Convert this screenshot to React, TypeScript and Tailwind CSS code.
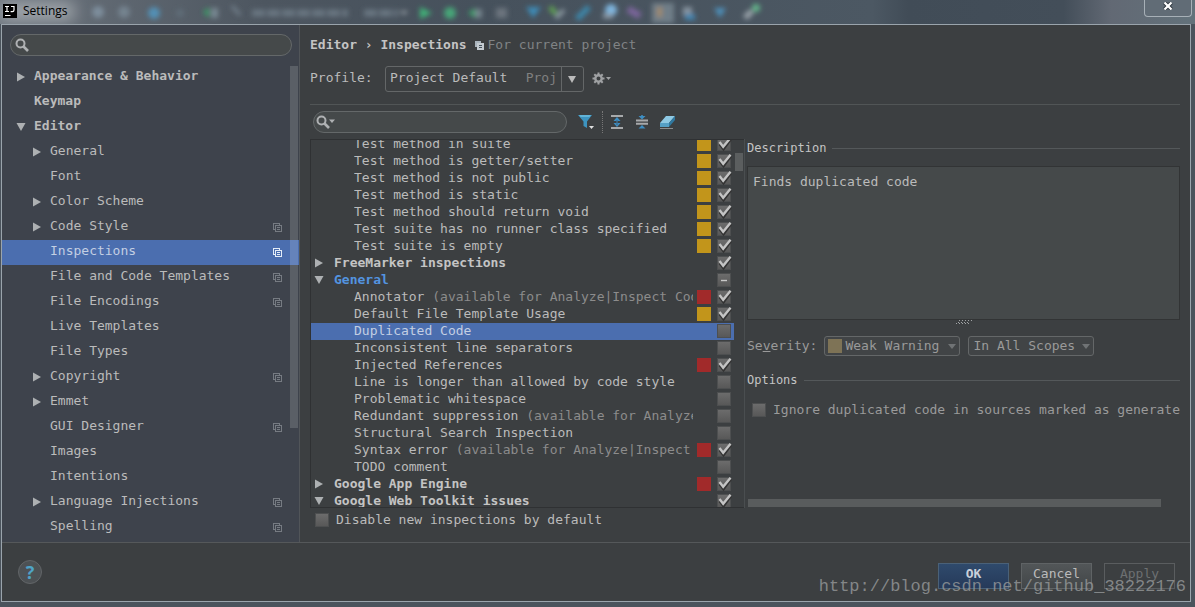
import { ReactNode } from "react";
import clsx from "clsx";

type SettingsNode = {
  label: string;
  level?: number;
  arrow?: "right" | "down";
  project?: boolean;
  selected?: boolean;
};

const settingsTree: SettingsNode[] = [
  { label: "Appearance & Behavior", level: 0, arrow: "right" },
  { label: "Keymap", level: 0 },
  { label: "Editor", level: 0, arrow: "down" },
  { label: "General", arrow: "right" },
  { label: "Font" },
  { label: "Color Scheme", arrow: "right" },
  { label: "Code Style", arrow: "right", project: true },
  { label: "Inspections", project: true, selected: true },
  { label: "File and Code Templates", project: true },
  { label: "File Encodings", project: true },
  { label: "Live Templates" },
  { label: "File Types" },
  { label: "Copyright", arrow: "right", project: true },
  { label: "Emmet", arrow: "right" },
  { label: "GUI Designer", project: true },
  { label: "Images" },
  { label: "Intentions" },
  { label: "Language Injections", arrow: "right", project: true },
  { label: "Spelling", project: true },
];

type Inspection = {
  label: string;
  note?: string;
  group?: "right" | "down";
  severity?: "warning" | "error";
  state: "on" | "off" | "mixed";
  changed?: boolean;
  selected?: boolean;
};

const inspections: Inspection[] = [
  { label: "Test method in suite", severity: "warning", state: "on" },
  { label: "Test method is getter/setter", severity: "warning", state: "on" },
  { label: "Test method is not public", severity: "warning", state: "on" },
  { label: "Test method is static", severity: "warning", state: "on" },
  { label: "Test method should return void", severity: "warning", state: "on" },
  { label: "Test suite has no runner class specified", severity: "warning", state: "on" },
  { label: "Test suite is empty", severity: "warning", state: "on" },
  { label: "FreeMarker inspections", group: "right", state: "on" },
  { label: "General", group: "down", state: "mixed", changed: true },
  { label: "Annotator", note: "(available for Analyze|Inspect Code)", severity: "error", state: "on" },
  { label: "Default File Template Usage", severity: "warning", state: "on" },
  { label: "Duplicated Code", state: "off", selected: true },
  { label: "Inconsistent line separators", state: "off" },
  { label: "Injected References", severity: "error", state: "on" },
  { label: "Line is longer than allowed by code style", state: "off" },
  { label: "Problematic whitespace", state: "off" },
  { label: "Redundant suppression", note: "(available for Analyze|Inspect Code)", state: "off" },
  { label: "Structural Search Inspection", state: "off" },
  { label: "Syntax error", note: "(available for Analyze|Inspect Code)", severity: "error", state: "on" },
  { label: "TODO comment", state: "off" },
  { label: "Google App Engine", group: "right", severity: "error", state: "on" },
  { label: "Google Web Toolkit issues", group: "down", state: "on" },
];

function Arrow({ dir }: { dir?: "right" | "down" }) {
  return (
    <svg viewBox="0 0 10 10" className="size-[10px] shrink-0 fill-[#adb0b2]">
      {dir === "right" && <path d="M1 0.5 L9 5 L1 9.5 Z" />}
      {dir === "down" && <path d="M0.5 1 H9.5 L5 9 Z" />}
    </svg>
  );
}

function CopyIcon({ bright }: { bright?: boolean }) {
  return (
    <svg
      viewBox="0 0 9 9"
      className={clsx("size-[9px] shrink-0", bright ? "stroke-[#e3ecf7]" : "stroke-[#767b82]")}
      fill="none"
      strokeWidth="1"
      shapeRendering="crispEdges"
    >
      <path d="M2.5 6.5 H0.5 V0.5 H6.5 V2" />
      <path d="M2.5 2.5 H8.5 V8.5 H2.5 Z M4 4.5 H7 M4 6.5 H7" />
    </svg>
  );
}

function ProjectIcon() {
  return (
    <svg viewBox="0 0 9 9" className="size-[9px] shrink-0" shapeRendering="crispEdges">
      <path d="M0 0 H6 V2 H2 V6 H0 Z" fill="#a9b4bd" />
      <path d="M2 2 H9 V9 H2 Z" fill="#c3cbd1" />
      <path d="M4 4.5 H7 M4 6.5 H7" stroke="#45525d" />
    </svg>
  );
}

function Magnifier({ menu }: { menu?: boolean }) {
  return (
    <svg viewBox="0 0 20 14" className="h-[14px] w-5 shrink-0" fill="none">
      <circle cx="5.5" cy="5.5" r="4" stroke="#afb1b3" strokeWidth="2" />
      <path d="M8.5 8.5 L13 13" stroke="#afb1b3" strokeWidth="2.6" />
      {menu && <path d="M13 4.5 H19 L16 8 Z" fill="#afb1b3" />}
    </svg>
  );
}

function Check({ state, id, label }: { state: Inspection["state"]; id: string; label?: string }) {
  return (
    <span className="grid size-[14px] shrink-0">
      <input
        id={id}
        type="checkbox"
        defaultChecked={state === "on"}
        aria-label={label}
        className="col-start-1 row-start-1 size-[14px] appearance-none border border-[#4d4f50] bg-linear-to-b from-[#6c6c6c] to-[#585858]"
      />
      <svg
        viewBox="0 0 14 14"
        className="pointer-events-none col-start-1 row-start-1 size-[14px] overflow-visible"
        fill="none"
      >
        {state === "on" && (
          <>
            <path d="M3 7 L6.5 11.5 L13.5 2" stroke="#333" strokeWidth="3.4" />
            <path d="M2.5 5 L6.2 9.8 L13.5 0.8" stroke="#c4c4c4" strokeWidth="2.4" />
          </>
        )}
        {state === "mixed" && <path d="M4 7.5 H10" stroke="#c8c8c8" strokeWidth="1.4" />}
      </svg>
    </span>
  );
}

function SectionTitle({ children }: { children: ReactNode }) {
  return (
    <div className="flex h-4 items-center gap-1.5 text-xs leading-4 text-[#c4c4c4]">
      <h3>{children}</h3>
      <div className="h-px flex-1 bg-[#54585a]" />
    </div>
  );
}

function TitleBar() {
  return (
    <header className="relative flex h-6 shrink-0 items-center justify-between overflow-hidden bg-[#48535e]">
      <svg
        viewBox="0 0 1195 24"
        preserveAspectRatio="xMinYMin slice"
        className="absolute inset-0 h-full w-full"
      >
        <defs>
          <filter id="soft" x="-50%" y="-100%" width="200%" height="300%">
            <feGaussianBlur stdDeviation="2.6" />
          </filter>
          <filter id="wide" x="-50%" y="-100%" width="200%" height="300%">
            <feGaussianBlur stdDeviation="8" />
          </filter>
          <linearGradient id="glass">
            <stop offset="0" stopColor="#6c747d" />
            <stop offset="0.22" stopColor="#4d5660" />
            <stop offset="0.4" stopColor="#46515c" />
            <stop offset="0.73" stopColor="#4c5863" />
            <stop offset="0.76" stopColor="#414c57" />
            <stop offset="0.89" stopColor="#434e59" />
            <stop offset="0.93" stopColor="#626974" />
            <stop offset="1" stopColor="#63727b" />
          </linearGradient>
        </defs>
        <rect width="1195" height="24" fill="url(#glass)" />
        <rect x="0" y="3" width="74" height="17" fill="#a6abb0" filter="url(#wide)" />
        <g filter="url(#soft)">
          <circle cx="98" cy="12" r="6" fill="#7d8d9b" />
          <circle cx="124" cy="12" r="6" fill="#75838f" />
          <circle cx="154" cy="13" r="6" fill="#5390b5" />
          <circle cx="180" cy="13" r="4" fill="#5f6d78" />
          <path d="M203 12 L209 7 V18 Z" fill="#389c66" />
          <rect x="211" y="8" width="7" height="10" fill="#788993" />
          <path d="M232 6 L240 15" stroke="#75828d" strokeWidth="3" />
          <path d="M252 13 H348 M364 13 H398" stroke="#697681" strokeWidth="7" strokeDasharray="13 2" />
          <path d="M400 11 H408 L404 15 Z" fill="#a0a8af" />
          <path d="M420 7 L432 13 L420 19 Z" fill="#3fb478" />
          <circle cx="450" cy="13" r="6" fill="#46a678" />
          <path d="M468 13 L475 8 V18 Z" fill="#3ca06b" />
          <rect x="475" y="9" width="7" height="9" fill="#74848d" />
          <rect x="496" y="8" width="11" height="10" fill="#6c757e" />
          <path d="M526 7 H541 L533 18 Z" fill="#3d8cb8" />
          <path d="M550 7 L556 14" stroke="#5fa052" strokeWidth="5" />
          <path d="M556 18 L564 10" stroke="#8d9aa3" strokeWidth="4" />
          <path d="M577 19 L589 7" stroke="#3d87aa" strokeWidth="6" />
          <circle cx="611" cy="10" r="6" fill="#7fb6df" />
          <path d="M603 16 H613" stroke="#8b98a4" strokeWidth="5" />
          <path d="M628 9 L640 16" stroke="#7b659b" strokeWidth="7" />
          <rect x="652" y="3" width="22" height="20" fill="#707e88" />
          <rect x="657" y="7" width="5" height="10" fill="#a18a6c" />
          <rect x="683" y="7" width="9" height="9" fill="#8794a0" />
          <rect x="685" y="14" width="10" height="6" fill="#4285b1" />
          <path d="M714 8 H726 L720 18 Z" fill="#4e91bc" />
          <path d="M745 18 L752 11" stroke="#9aa3aa" strokeWidth="6" />
          <circle cx="756" cy="8" r="4" fill="#62b58a" />
        </g>
      </svg>
      <div className="relative flex items-center gap-1.5 pb-0.5 pl-[3px]">
        <svg viewBox="0 0 14 14" className="size-[14px]">
          <rect width="14" height="14" fill="#000" />
          <path
            d="M2 2.5 H6 M4 2.5 V7.5 M2 7.5 H6 M8 2.5 H11 V6 Q11 7.6 9.3 7.6 H7.6 M2 11.5 H7.5"
            stroke="#fff"
            strokeWidth="1.2"
            fill="none"
          />
        </svg>
        <h1 className="font-['Open_Sans',sans-serif] text-xs leading-4 text-black">Settings</h1>
      </div>
      <button
        aria-label="Close"
        className="relative mr-[3px] flex h-[17px] w-12 items-center justify-center self-start rounded-b-[4px] border border-t-0 border-[#a7b0b7] bg-[#616c76]"
      >
        <svg viewBox="0 0 10 8" className="mb-1 h-2 w-[10px]">
          <path d="M1.5 0.5 L8.5 7.5 M8.5 0.5 L1.5 7.5" stroke="#2f373e" strokeWidth="4" />
          <path d="M1.5 0.5 L8.5 7.5 M8.5 0.5 L1.5 7.5" stroke="#fff" strokeWidth="2.2" />
        </svg>
      </button>
    </header>
  );
}

function Sidebar() {
  return (
    <aside className="flex w-[298px] shrink-0 flex-col border-r border-[#515559] bg-[#3e434c] pt-[9px]">
      <label className="mr-[7px] mb-[9px] ml-2 flex h-[22px] items-center rounded-full border border-[#646869] bg-[#45494a] pl-1">
        <Magnifier />
        <input type="text" aria-label="Search settings" className="min-w-0 flex-1 bg-transparent outline-none" />
      </label>
      <div className="relative flex-1">
        <ul>
          {settingsTree.map((node) => (
            <li
              key={node.label}
              className={clsx(
                "flex h-[25px] items-center gap-2 pr-[17px] pb-px",
                node.level === 0 ? "pl-[14px] font-bold" : "pl-[30px]",
                node.selected && "bg-[#4b6eaf] text-[#c3cfe3]"
              )}
            >
              <Arrow dir={node.arrow} />
              <span className="flex-1 pb-0.5">{node.label}</span>
              {node.project && <CopyIcon bright={node.selected} />}
            </li>
          ))}
        </ul>
        <div className="absolute top-px right-px h-[362px] w-2 bg-white/15" />
      </div>
    </aside>
  );
}

function Toolbar() {
  return (
    <div className="flex h-[22px] items-center">
      <label className="ml-[3px] flex h-[22px] w-[254px] items-center rounded-full border border-[#646869] bg-[#45494a] pl-0.5">
        <Magnifier menu />
        <input type="text" aria-label="Search inspections" className="min-w-0 flex-1 bg-transparent outline-none" />
      </label>
      <button aria-label="Filter" className="ml-[11px]">
        <svg viewBox="0 0 16 16" className="size-4">
          <path d="M0 1 H14 L9 7.5 V14 L5.5 12 V7.5 Z" fill="#3d94c0" />
          <path d="M1 1 H13 L11.5 3 H2.5 Z" fill="#62b4d8" />
          <path d="M11 12 H16 L13.5 15 Z" fill="#e0e0e0" />
        </svg>
      </button>
      <div className="mr-[7px] ml-2 h-[22px] border-l border-dotted border-[#777]" />
      <button aria-label="Expand all">
        <svg viewBox="0 0 14 16" className="h-4 w-[14px]">
          <path d="M1 2 H13 M1 14 H13" stroke="#a7a9ab" strokeWidth="2" />
          <path d="M7 3 L10.5 7 H3.5 Z M7 13 L10.5 9 H3.5 Z" fill="#3e8ec2" />
          <path d="M7 6 V11" stroke="#3e6f92" strokeWidth="1.4" />
        </svg>
      </button>
      <button aria-label="Collapse all" className="ml-[11px]">
        <svg viewBox="0 0 14 16" className="h-4 w-[14px]">
          <path d="M1 6.5 H13 M1 9.7 H13" stroke="#a7a9ab" strokeWidth="2" />
          <path d="M3.5 2 H10.5 L7 5.5 Z M3.5 14.5 H10.5 L7 11 Z" fill="#3e8ec2" />
          <path d="M7 1 V4" stroke="#3e8ec2" strokeWidth="1.6" />
        </svg>
      </button>
      <button aria-label="Reset" className="ml-2.5">
        <svg viewBox="0 0 17 16" className="h-4 w-[17px]">
          <path d="M1 9 L7 2 H16 L10 9 Z" fill="#8ec9e4" />
          <path d="M1 9 H10 V13 H1 Z" fill="#55a0c6" />
          <path d="M10 9 L16 2 V6 L10 13 Z" fill="#2f78a0" />
          <path d="M1 14.5 H14" stroke="#8a8d8f" />
        </svg>
      </button>
    </div>
  );
}

function InspectionRow({ item, index }: { item: Inspection; index: number }) {
  return (
    <li
      className={clsx(
        "mr-2.5 flex h-[17px] shrink-0 items-center gap-1 pr-[3px] pb-0.5",
        item.group ? "pl-[3px] font-bold text-[#c4c4c4]" : "pl-[43px]",
        item.selected && "bg-[#4b6eaf] text-[#c3cfe3]"
      )}
    >
      {item.group && (
        <span className="mr-1.5 flex">
          <Arrow dir={item.group} />
        </span>
      )}
      <span className={clsx("flex-1 overflow-hidden whitespace-nowrap", item.changed && "text-[#5394e0]")}>
        {item.label}
        {item.note && <span className="text-[#8c8c8c]"> {item.note}</span>}
      </span>
      <span
        className={clsx(
          "mr-0.5 size-[14px] shrink-0",
          item.severity === "warning" && "bg-[#c2951b]",
          item.severity === "error" && "bg-[#a12a2a]"
        )}
      />
      <Check id={`inspection-${index}`} state={item.state} label={item.label} />
    </li>
  );
}

function InspectionList() {
  return (
    <div className="flex w-[435px] shrink-0 flex-col border-r border-[#4a4e50]">
      <div className="relative min-h-0 flex-1 overflow-hidden border border-r-0 border-[#2f3133]">
        {/* scrolled by a quarter row */}
        <ul className="-mt-1">
          {inspections.map((item, i) => (
            <InspectionRow key={item.label} item={item} index={i} />
          ))}
        </ul>
        <div className="absolute top-[13px] right-px h-[18px] w-2 bg-[#5b5e5f]" />
      </div>
    </div>
  );
}

function Details() {
  const selectBox =
    "h-5 w-full appearance-none rounded-[3px] border border-[#646768] bg-[#414446] text-[#9a9a9a] leading-4";
  return (
    <div className="flex min-w-0 flex-1 flex-col pt-px pl-0.5">
      <SectionTitle>Description</SectionTitle>
      <div className="mt-2.5 h-[154px] border border-[#323435] bg-[#45494a] px-[5px] py-[7px]">
        Finds duplicated code
      </div>
      <div className="flex h-4 justify-center">
        <svg viewBox="0 0 16 4" className="h-1 w-4">
          <path
            d="M3 0.5 H16 M2 2.5 H14 M0 3.5 H13"
            stroke="#a0a3a5"
            strokeWidth="1"
            strokeDasharray="1 2"
          />
        </svg>
      </div>
      <div className="flex items-center gap-2 text-[#9a9a9a]">
        <label htmlFor="severity" className="-mr-px">
          Se<span className="underline">v</span>erity:
        </label>
        <div className="relative flex w-[136px] items-center">
          <select id="severity" className={clsx(selectBox, "pl-5")}>
            <option>Weak Warning</option>
          </select>
          <span className="pointer-events-none absolute left-1 size-[14px] bg-[#7e7356]" />
          <svg viewBox="0 0 8 5" className="pointer-events-none absolute right-1 h-[5px] w-2">
            <path d="M0 0 H8 L4 5 Z" fill="#707375" />
          </svg>
        </div>
        <div className="relative flex w-[126px] items-center">
          <select aria-label="Scope" className={clsx(selectBox, "pl-1")}>
            <option>In All Scopes</option>
          </select>
          <svg viewBox="0 0 8 5" className="pointer-events-none absolute right-1 h-[5px] w-2">
            <path d="M0 0 H8 L4 5 Z" fill="#707375" />
          </svg>
        </div>
      </div>
      <div className="mt-4">
        <SectionTitle>Options</SectionTitle>
      </div>
      <div className="mt-3.5 flex items-center gap-[7px] overflow-hidden pl-[5px] whitespace-nowrap text-[#9a9a9a]">
        <Check id="ignore-generated" state="off" />
        <label htmlFor="ignore-generated">Ignore duplicated code in sources marked as generated</label>
      </div>
      <div className="mt-auto mr-[19px] mb-px ml-px h-2 bg-[#595c5d]" />
    </div>
  );
}

function Main() {
  return (
    <main className="flex min-w-0 flex-1 flex-col px-2.5 pt-2.5">
      <div className="flex h-5 items-center font-bold text-[#c4c4c4]">
        <h2 className="whitespace-pre">Editor › Inspections</h2>
        <span className="mr-1 ml-2 flex">
          <ProjectIcon />
        </span>
        <span className="font-normal text-[#808385]">For current project</span>
      </div>
      <div className="mt-[11px] flex h-[26px] items-center">
        <label htmlFor="profile" className="w-[75px] pb-0.5">
          Profile:
        </label>
        <div className="relative flex h-[26px] w-[199px]">
          <select
            id="profile"
            className="h-full w-full appearance-none rounded-[3px] border border-[#646768] pb-0.5 pl-1"
          >
            <option>Project Default</option>
          </select>
          <span className="pointer-events-none absolute inset-y-0 right-0 flex items-center">
            <span className="pr-1 pb-0.5 text-[#808080]">Proj</span>
            <span className="flex h-full w-[23px] items-center justify-center border-l border-[#646768] pr-0.5">
              <svg viewBox="0 0 8 7" className="h-[7px] w-2">
                <path d="M0 0 H8 L4 7 Z" fill="#bbbbbb" />
              </svg>
            </span>
          </span>
        </div>
        <button aria-label="Profile actions" className="mb-0.5 ml-2">
          <svg viewBox="0 0 20 13" className="h-[13px] w-5">
            <circle cx="6.5" cy="6.5" r="3.2" stroke="#9fa1a3" strokeWidth="2.4" fill="none" />
            <path
              d="M6.5 0.5 V3 M6.5 10 V12.5 M0.5 6.5 H3 M10 6.5 H12.5 M2.3 2.3 L4 4 M9 9 L10.7 10.7 M10.7 2.3 L9 4 M4 9 L2.3 10.7"
              stroke="#9fa1a3"
              strokeWidth="2"
            />
            <path d="M14 5 H19 L16.5 8 Z" fill="#9fa1a3" />
          </svg>
        </button>
      </div>
      <div className="mt-3 mb-1.5 h-px bg-[#515556]" />
      <Toolbar />
      <div className="mt-1.5 flex min-h-0 flex-1">
        <InspectionList />
        <Details />
      </div>
      <div className="mb-3 flex h-[22px] items-center gap-[7px] pt-0.5 pl-[5px]">
        <Check id="disable-new" state="off" />
        <label htmlFor="disable-new">Disable new inspections by default</label>
      </div>
    </main>
  );
}

function Footer() {
  return (
    <footer className="relative flex h-[59px] shrink-0 items-center justify-between border-t border-[#55585a] pr-[15px] pl-4">
      <button
        aria-label="Help"
        className="size-6 rounded-full border border-[#626568] bg-[#4d5154] font-['Open_Sans',sans-serif] text-lg leading-5 font-bold text-[#4fa3c7]"
      >
        ?
      </button>
      <div className="mt-2 flex gap-3">
        <button className="h-[26px] w-[71px] border border-[#4a6178] bg-linear-to-b from-[#2f4a6c] to-[#263a5a] pb-1 font-bold text-[#c8d0da]">
          OK
        </button>
        <button className="h-[26px] w-[71px] border border-[#5f6365] bg-linear-to-b from-[#525658] to-[#424648] pb-1">
          Cancel
        </button>
        <button disabled className="h-[26px] w-[71px] border border-[#5a5d5f] pb-1 text-[#6d7072]">
          Apply
        </button>
      </div>
      <p className="pointer-events-none absolute right-1 bottom-1 font-['Liberation_Mono',monospace] text-[17px] leading-5 text-[#979a9b]/80">
        http://blog.csdn.net/github_38222176
      </p>
    </footer>
  );
}

export default function App() {
  return (
    <div className="flex h-screen flex-col overflow-hidden bg-[#4a535c] font-['DejaVu_Sans_Mono',monospace] text-[13px] leading-4 text-[#bbbbbb]">
      <TitleBar />
      <div className="mr-1 mb-[5px] ml-px flex min-h-0 flex-1 flex-col border border-[#9aa4ac] bg-[#3c3f41]">
        <div className="flex min-h-0 flex-1">
          <Sidebar />
          <Main />
        </div>
        <Footer />
      </div>
    </div>
  );
}
